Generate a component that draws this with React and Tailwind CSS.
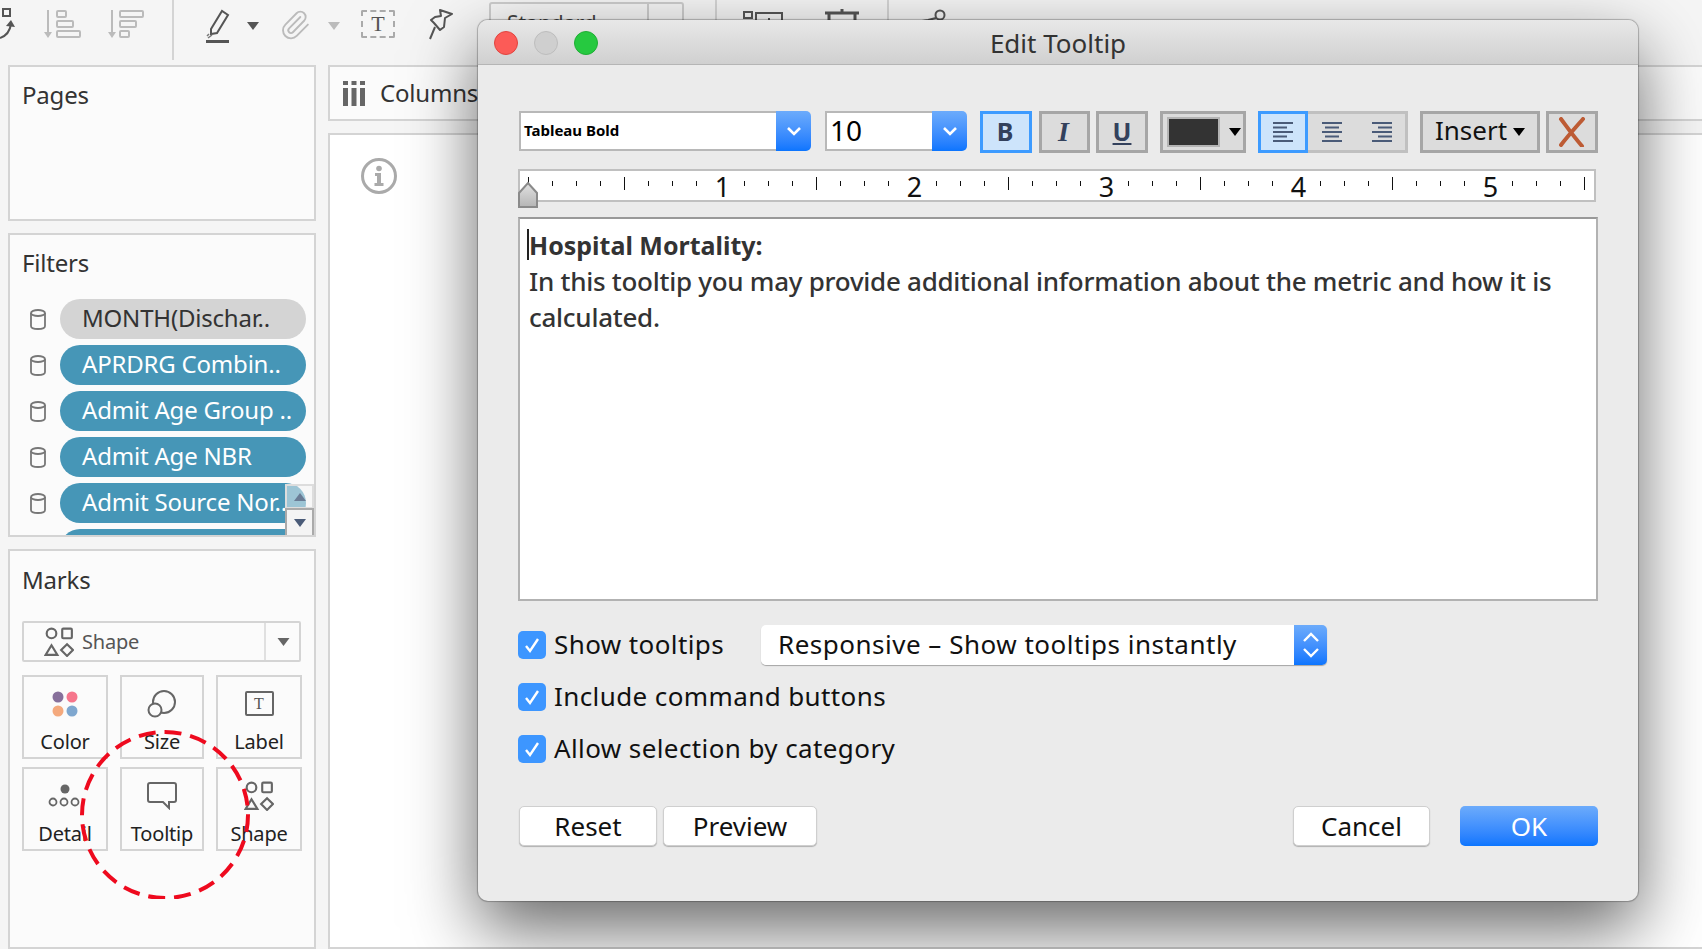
import React from "react";
import { Paperclip } from "lucide-react";

const UI = "font-['Noto_Sans',sans-serif]";
const TAB = "font-['Noto_Sans',sans-serif]";

function Caret({ className }) {
  return (
    <svg width="12" height="8" viewBox="0 0 12 8" className={className}>
      <path d="M0 0h12L6 8z" fill="currentColor" />
    </svg>
  );
}

function Chevron() {
  return (
    <svg width="18" height="12" viewBox="0 0 18 12">
      <path d="M3 3l6 6 6-6" fill="none" stroke="#fff" strokeWidth="2.6" />
    </svg>
  );
}

function Toolbar() {
  return (
    <div className="h-[65px] flex items-start shrink-0">
      <svg width="16" height="40" viewBox="0 0 16 40" className="mt-0 shrink-0">
        <rect x="3" y="9" width="7" height="7" fill="none" stroke="#555" strokeWidth="2" />
        <path d="M0 38c6-2 10-7 11-14" fill="none" stroke="#555" strokeWidth="2" />
        <path d="M6 26l5-6 4 7z" fill="#555" />
      </svg>
      <svg width="40" height="40" viewBox="0 0 40 40" className="ml-[28px] shrink-0">
        <path d="M4 10v24" stroke="#bbb" strokeWidth="2" />
        <path d="M0 32h8l-4 6z" fill="#bbb" />
        <g fill="none" stroke="#bbb" strokeWidth="2">
          <rect x="13" y="11" width="9" height="6" rx="1" />
          <rect x="13" y="21" width="16" height="6" rx="1" />
          <rect x="13" y="31" width="23" height="6" rx="1" />
        </g>
      </svg>
      <svg width="40" height="40" viewBox="0 0 40 40" className="ml-[24px] shrink-0">
        <path d="M4 10v24" stroke="#bbb" strokeWidth="2" />
        <path d="M0 32h8l-4 6z" fill="#bbb" />
        <g fill="none" stroke="#bbb" strokeWidth="2">
          <rect x="12" y="11" width="23" height="6" rx="1" />
          <rect x="12" y="21" width="16" height="6" rx="1" />
          <rect x="12" y="31" width="9" height="6" rx="1" />
        </g>
      </svg>
      <div className="ml-[24px] w-[2px] h-[60px] bg-[#d4d4d4] shrink-0" />
      <svg width="24" height="46" viewBox="0 0 24 46" className="ml-[32px] shrink-0">
        <path d="M5 29L16 11l6 4-11 18-6 1z" fill="none" stroke="#555" strokeWidth="2" />
        <path d="M2 38l4-3M1 36l2-2" stroke="#777" strokeWidth="1.5" />
        <rect x="0" y="40" width="23" height="3" fill="#555" />
      </svg>
      <Caret className="ml-[17px] mt-[22px] text-[#555] shrink-0" />
      <Paperclip size={32} strokeWidth={1.4} className="ml-[20px] mt-[9px] text-[#bbb] shrink-0" />
      <Caret className="ml-[17px] mt-[22px] text-[#bbb] shrink-0" />
      <div className="ml-[21px] mt-[10px] w-[34px] h-[28px] border-2 border-dashed border-[#aaa] rounded-[2px] flex items-center justify-center font-['Liberation_Serif',serif] text-[22px] leading-none text-[#555] shrink-0">T</div>
      <svg width="28" height="32" viewBox="0 0 28 32" className="ml-[31px] mt-[9px] shrink-0">
        <path d="M14 1l12 4-7 4-1 9-4 3-6-7-3-3 4-3 6-1z" fill="none" stroke="#555" strokeWidth="2" strokeLinejoin="round" />
        <path d="M9 18l-5 12" stroke="#555" strokeWidth="2" />
      </svg>
      <div className={`ml-[35px] mt-[2px] w-[195px] h-[40px] border-2 border-[#ccc] rounded-[3px] flex shrink-0 ${TAB}`}>
        <div className="w-[156px] pl-[16px] text-[21px] leading-[39px] text-[#444]">Standard</div>
        <div className="w-[2px] bg-[#ccc]" />
      </div>
      <div className="ml-[31px] w-[2px] h-[60px] bg-[#d4d4d4] shrink-0" />
      <svg width="40" height="20" viewBox="0 0 40 20" className="ml-[26px] mt-[10px] shrink-0">
        <rect x="1" y="2" width="8" height="6" fill="none" stroke="#555" strokeWidth="2" />
        <path d="M13 18V3h26v15M26 8v8" fill="none" stroke="#555" strokeWidth="2" />
      </svg>
      <svg width="36" height="20" viewBox="0 0 36 20" className="ml-[42px] mt-[7px] shrink-0">
        <path d="M0 6h34M4 6v14M30 6v14M17 2v4" fill="none" stroke="#555" strokeWidth="3" />
      </svg>
      <div className="ml-[26px] w-[2px] h-[60px] bg-[#d4d4d4] shrink-0" />
      <svg width="28" height="24" viewBox="0 0 28 24" className="ml-[32px] mt-[8px] shrink-0">
        <circle cx="19" cy="7" r="4.5" fill="none" stroke="#555" strokeWidth="2" />
        <path d="M15 10L7 12l-6 1" fill="none" stroke="#555" strokeWidth="2" />
      </svg>
    </div>
  );
}

function Panel({ title, className, titleClassName = "mt-[12px]", children }) {
  return (
    <div className={`border-2 border-[#d4d4d4] bg-[#fbfbfb] pl-[12px] pr-[8px] ${className}`}>
      <div className={`${TAB} text-[24px] tracking-[-0.2px] leading-[32px] text-[#333] ${titleClassName}`}>{title}</div>
      {children}
    </div>
  );
}

function Cylinder() {
  return (
    <svg width="18" height="22" viewBox="0 0 18 22" className="shrink-0">
      <g fill="none" stroke="#777" strokeWidth="1.8">
        <ellipse cx="9" cy="5" rx="7" ry="3" />
        <path d="M2 5v13c0 2 3 3 7 3s7-1 7-3V5" />
      </g>
    </svg>
  );
}

function FilterRow({ label, gray }) {
  return (
    <div className="flex items-center h-[40px] shrink-0">
      <div className="w-[19px] flex justify-center ml-[6px]"><Cylinder /></div>
      <div className={`ml-[13px] w-[246px] h-[40px] rounded-full pl-[22px] text-[24px] tracking-[-0.2px] leading-[37px] whitespace-nowrap overflow-hidden ${TAB} ${gray ? "bg-[#d4d4d4] text-[#333]" : "bg-[#4696b7] text-white"}`}>{label}</div>
    </div>
  );
}

function ShapeIcon({ size = 30 }) {
  return (
    <svg width={size} height={size} viewBox="0 0 28 28" className="shrink-0">
      <g fill="none" stroke="#666" strokeWidth="2">
        <circle cx="7" cy="6" r="4.5" />
        <rect x="17" y="1.5" width="9" height="9" rx="1" />
        <path d="M7 17l5.5 9H1.5z" />
        <path d="M21.5 16l5.5 5.5-5.5 5.5-5.5-5.5z" />
      </g>
    </svg>
  );
}

function MarkCard({ label, children }) {
  return (
    <div className="h-[84px] border-2 border-[#d4d4d4] flex flex-col items-center">
      <div className="h-[52px] flex items-center justify-center pt-[1px]">{children}</div>
      <div className={`${TAB} text-[20px] tracking-[-0.2px] leading-[26px] text-[#222]`}>{label}</div>
    </div>
  );
}

function Marks() {
  return (
    <Panel title="Marks" className="relative flex-1" titleClassName="mt-[13px]">
      <div className="mt-[25px] h-[41px] w-[279px] border-2 border-[#d4d4d4] rounded-[2px] flex items-center">
        <div className="ml-[20px]"><ShapeIcon /></div>
        <div className={`${TAB} ml-[8px] text-[20px] tracking-[-0.2px] text-[#555] w-[182px]`}>Shape</div>
        <div className="w-[2px] h-full bg-[#e0e0e0]" />
        <Caret className="ml-[11px] text-[#666] w-[13px]" />
      </div>
      <div className="mt-[13px] w-[280px] grid grid-cols-[86px_84px_86px] gap-x-[12px] gap-y-[8px]">
        <MarkCard label="Color">
          <svg width="26" height="26" viewBox="0 0 26 26">
            <circle cx="6" cy="6" r="5.5" fill="#87709b" />
            <circle cx="20" cy="6" r="5.5" fill="#f6768c" />
            <circle cx="6" cy="20" r="5.5" fill="#f4a97d" />
            <circle cx="20" cy="20" r="5.5" fill="#7fa7cf" />
          </svg>
        </MarkCard>
        <MarkCard label="Size">
          <svg width="30" height="28" viewBox="0 0 30 28">
            <g fill="none" stroke="#666" strokeWidth="2">
              <circle cx="17" cy="12" r="11" />
              <circle cx="8" cy="20" r="6.5" fill="#fbfbfb" />
            </g>
          </svg>
        </MarkCard>
        <MarkCard label="Label">
          <div className="w-[29px] h-[25px] border-2 border-[#666] rounded-[2px] flex items-center justify-center font-['Liberation_Serif',serif] text-[16px] leading-none text-[#555]">T</div>
        </MarkCard>
        <MarkCard label="Detail">
          <svg width="34" height="24" viewBox="0 0 34 24">
            <circle cx="17" cy="5" r="4.5" fill="#666" />
            <g fill="none" stroke="#666" strokeWidth="1.8">
              <circle cx="5" cy="18" r="3.5" />
              <circle cx="16" cy="18" r="3.5" />
              <circle cx="27" cy="18" r="3.5" />
            </g>
          </svg>
        </MarkCard>
        <MarkCard label="Tooltip">
          <svg width="30" height="28" viewBox="0 0 30 28">
            <path d="M3 1h24a2 2 0 0 1 2 2v15a2 2 0 0 1-2 2h-5v6l-6-6H3a2 2 0 0 1-2-2V3a2 2 0 0 1 2-2z" fill="none" stroke="#666" strokeWidth="2" />
          </svg>
        </MarkCard>
        <MarkCard label="Shape"><ShapeIcon /></MarkCard>
      </div>
      <svg width="180" height="180" viewBox="0 0 180 180" className="absolute left-[67px] top-[168px]">
        <circle cx="88" cy="96" r="83" fill="none" stroke="#ee0a1e" strokeWidth="4" strokeDasharray="17 9" />
      </svg>
    </Panel>
  );
}

function Sidebar() {
  return (
    <div className="ml-[8px] w-[308px] flex flex-col gap-[12px] shrink-0 h-[884px]">
      <Panel title="Pages" className="h-[156px] shrink-0" />
      <Panel title="Filters" className="h-[304px] shrink-0 relative overflow-hidden">
        <div className="mt-[20px] flex flex-col gap-[6px]">
          <FilterRow label="MONTH(Dischar.." gray />
          <FilterRow label="APRDRG Combin.." />
          <FilterRow label="Admit Age Group .." />
          <FilterRow label="Admit Age NBR" />
          <FilterRow label="Admit Source Nor.." />
          <FilterRow label="" />
        </div>
        <div className="absolute right-0 top-[249px] w-[29px] h-[25px] bg-[#f4f4f4]/50 border-2 border-[#ddd] flex items-center justify-center">
          <Caret className="rotate-180 text-[#6a7c95]" />
        </div>
        <div className="absolute right-0 top-[273px] w-[29px] h-[29px] bg-[#f4f4f4] border-2 border-[#aaa] flex items-center justify-center">
          <Caret className="text-[#4a5b78]" />
        </div>
      </Panel>
      <Marks />
    </div>
  );
}

function Main() {
  return (
    <div className="ml-[12px] flex-1 flex flex-col gap-[12px]">
      <div className="h-[56px] border-2 border-[#d4d4d4] border-r-0 bg-[#fbfbfb] flex items-center pl-[13px]">
        <svg width="22" height="26" viewBox="0 0 22 26" className="shrink-0">
          <g fill="#666">
            <rect x="0" y="1" width="5" height="4" />
            <rect x="0" y="8" width="5" height="18" />
            <rect x="8.5" y="1" width="5" height="4" />
            <rect x="8.5" y="8" width="5" height="18" />
            <rect x="17" y="1" width="5" height="4" />
            <rect x="17" y="8" width="5" height="18" />
          </g>
        </svg>
        <span className={`${TAB} ml-[15px] text-[24px] tracking-[-0.2px] text-[#333]`}>Columns</span>
      </div>
      <div className="flex-1 border-2 border-[#d4d4d4] border-r-0 bg-white pl-[30px] pt-[22px]">
        <svg width="38" height="38" viewBox="0 0 38 38">
          <circle cx="19" cy="19" r="16.5" fill="none" stroke="#aaa" strokeWidth="3" />
          <circle cx="19" cy="11.5" r="2.8" fill="#aaa" />
          <path d="M15 16h6v10h2.5v3H14.5v-3H17v-7h-2z" fill="#aaa" />
        </svg>
      </div>
    </div>
  );
}

function ToolBtn({ children, className = "", active }) {
  return (
    <div className={`h-[42px] border-[3px] flex items-center justify-center shrink-0 ${active ? "bg-[#cde4fb] border-[#3d9bff]" : "bg-[#dcdcdc] border-[#a6a6a6]"} ${className}`}>
      {children}
    </div>
  );
}

function AlignIcon({ kind }) {
  const short = kind === "left" ? 0 : kind === "center" ? 3 : 6;
  const rows = [[0, 20], [short, 14], [0, 20], [short, 14], [0, 20]];
  return (
    <svg width="20" height="22" viewBox="0 0 20 22">
      {rows.map((r, i) => (
        <rect key={i} x={r[0]} y={1 + i * 4.5} width={r[1]} height="2" fill="#4a5b78" />
      ))}
    </svg>
  );
}

function Combo({ className, blue, children }) {
  return (
    <div className={`h-[40px] flex shrink-0 ${className}`}>
      <div className="flex-1 bg-white border-2 border-r-0 border-[#b8b8b8] flex items-center overflow-hidden">{children}</div>
      <div className={`${blue} rounded-r-[5px] bg-gradient-to-b from-[#6cabfb] to-[#0a75fe] flex items-center justify-center`}><Chevron /></div>
    </div>
  );
}

function Ruler() {
  const ticks = [];
  for (let i = 0; i <= 44; i++) {
    const x = 10.5 + i * 24;
    if (i % 8 === 0 && i > 0) continue;
    if (i % 4 === 0) {
      ticks.push(<path key={i} d={`M${x} 8v13`} stroke="#111" strokeWidth="1" />);
    } else {
      ticks.push(<path key={i} d={`M${x} 12v5`} stroke="#111" strokeWidth="1" />);
    }
  }
  return (
    <svg width="1078" height="40" viewBox="0 0 1078 40" className="block mt-[16px] overflow-visible">
      <rect x="1" y="1" width="1076" height="31" fill="#fff" stroke="#c0c0c0" strokeWidth="2" />
      {ticks}
      {[1, 2, 3, 4, 5].map((n) => (
        <text key={n} x={12.5 + 192 * n} y="28" textAnchor="middle" fontSize="27" fill="#111" fontFamily="'Noto Sans', sans-serif">{n}</text>
      ))}
      <defs>
        <linearGradient id="mk" x1="0" y1="0" x2="0" y2="1">
          <stop offset="0" stopColor="#e2e2e2" />
          <stop offset="1" stopColor="#b5b5b5" />
        </linearGradient>
      </defs>
      <path d="M1 24l9-10 9 10v14H1z" fill="url(#mk)" stroke="#8a8a8a" strokeWidth="2" />
    </svg>
  );
}

function Check({ label }) {
  return (
    <div className="flex items-center h-[28px]">
      <div className="w-[28px] h-[28px] rounded-[5px] bg-[#3d96ff] flex items-center justify-center shrink-0">
        <svg width="18" height="18" viewBox="0 0 18 18">
          <path d="M3 10l4 5 8-12" fill="none" stroke="#fff" strokeWidth="2.4" />
        </svg>
      </div>
      <span className={`${UI} ml-[8px] mb-[2px] text-[26px] tracking-[0.4px] text-[#111] whitespace-nowrap`}>{label}</span>
    </div>
  );
}

function WhiteBtn({ className, children }) {
  return (
    <div className={`h-[40px] bg-white rounded-[5px] border border-[#cfcfcf] shadow-[0_1px_1px_rgba(0,0,0,0.25)] flex items-center justify-center ${UI} text-[26px] text-[#111] shrink-0 ${className}`}>{children}</div>
  );
}

function Dialog() {
  return (
    <div className="absolute left-[478px] top-[20px] w-[1160px] h-[881px] rounded-[10px] bg-[#ebebeb] shadow-[0_28px_70px_rgba(0,0,0,0.6),0_0_1px_1px_rgba(0,0,0,0.25)] overflow-hidden">
      <div className="relative h-[45px] bg-gradient-to-b from-[#e8e8e8] to-[#d0d0d0] border-b border-[#b5b5b5] flex items-center justify-center">
        <div className="absolute left-[16px] top-[11px] flex gap-[16px]">
          <div className="w-[24px] h-[24px] rounded-full bg-[#fc5b57] border border-[#e0443e]" />
          <div className="w-[24px] h-[24px] rounded-full bg-[#cfcfcf] border border-[#bdbdbd]" />
          <div className="w-[24px] h-[24px] rounded-full bg-[#26c940] border border-[#1fae35]" />
        </div>
        <span className={`${UI} text-[26px] text-[#333] pt-[3px]`}>Edit Tooltip</span>
      </div>
      <div className="pl-[40px] pr-[40px]">
        <div className="mt-[46px] flex items-start">
          <Combo className="w-[292px] ml-[1px]" blue="w-[35px]">
            <span className={`${UI} pl-[3px] pb-[2px] text-[15px] font-bold text-black`}>Tableau Bold</span>
          </Combo>
          <Combo className="w-[142px] ml-[14px]" blue="w-[35px]">
            <span className={`${UI} pl-[3px] pb-[2px] text-[28px] text-black`}>10</span>
          </Combo>
          <ToolBtn active className={`ml-[13px] w-[52px] pr-[2px] ${UI} text-[25px] font-bold text-[#33415c]`}>B</ToolBtn>
          <ToolBtn className={`ml-[7px] w-[51px] pr-[2px] font-['Liberation_Serif',serif] italic text-[28px] font-bold text-[#33415c]`}>I</ToolBtn>
          <ToolBtn className={`ml-[6px] w-[52px] ${UI} text-[25px] font-bold underline text-[#33415c]`}>U</ToolBtn>
          <ToolBtn className="ml-[12px] w-[86px] justify-start pl-[4px]">
            <div className="w-[53px] h-[30px] bg-[#333] border-2 border-[#b4b4b4]" />
            <Caret className="ml-[9px] text-black" />
          </ToolBtn>
          <div className="ml-[12px] w-[150px] h-[42px] flex shrink-0">
            <ToolBtn active className="w-[50px]"><AlignIcon kind="left" /></ToolBtn>
            <div className="flex-1 bg-[#dcdcdc] border-[3px] border-l-0 border-[#c0c0c0] flex items-center justify-between pl-[14px] pr-[13px]">
              <AlignIcon kind="center" />
              <AlignIcon kind="right" />
            </div>
          </div>
          <ToolBtn className={`ml-[12px] w-[120px] ${UI} text-[26px] text-[#111]`}>
            <span className="pb-[4px]">Insert</span>
            <Caret className="ml-[6px] text-black" />
          </ToolBtn>
          <ToolBtn className="ml-[6px] w-[52px]">
            <svg width="28" height="30" viewBox="0 0 28 30">
              <path d="M3 2c6 8 13 18 21 27M25 2C18 10 9 20 3 28" fill="none" stroke="#bd5b34" strokeWidth="4" strokeLinecap="round" />
            </svg>
          </ToolBtn>
        </div>
        <Ruler />
        <div className={`h-[384px] mt-[8px] bg-white border-2 border-[#b2b2b2] border-t-[#999] pl-[9px] pr-[10px] pt-[8px] ${TAB} text-[26px] tracking-[-0.27px] font-medium leading-[36px] text-[#333] relative`}>
          <div className="absolute left-[7px] top-[10px] w-[2px] h-[31px] bg-[#222]" />
          <div className="font-bold text-[25px] tracking-normal">Hospital Mortality:</div>
          <div>In this tooltip you may provide additional information about the metric and how it is calculated.</div>
        </div>
        <div className="mt-[24px] flex items-center">
          <div className="w-[243px]"><Check label="Show tooltips" /></div>
          <div className="w-[566px] h-[40px] flex rounded-[5px] shadow-[0_1px_1px_rgba(0,0,0,0.3)] overflow-hidden">
            <div className={`flex-1 bg-white flex items-center pl-[17px] pb-[2px] ${UI} text-[26px] tracking-[0.5px] text-[#111] whitespace-nowrap`}>Responsive – Show tooltips instantly</div>
            <div className="w-[33px] bg-gradient-to-b from-[#6cabfb] to-[#0a75fe] flex items-center justify-center">
              <svg width="18" height="28" viewBox="0 0 18 28">
                <path d="M2 10l7-7 7 7M2 18l7 7 7-7" fill="none" stroke="#fff" strokeWidth="2.4" />
              </svg>
            </div>
          </div>
        </div>
        <div className="mt-[18px] flex flex-col gap-[24px]">
          <Check label="Include command buttons" />
          <Check label="Allow selection by category" />
        </div>
        <div className="mt-[43px] flex items-center">
          <WhiteBtn className="w-[138px] ml-[1px]">Reset</WhiteBtn>
          <WhiteBtn className="w-[154px] ml-[6px]">Preview</WhiteBtn>
          <WhiteBtn className="w-[137px] ml-auto">Cancel</WhiteBtn>
          <div className={`w-[138px] h-[40px] ml-[30px] rounded-[5px] bg-gradient-to-b from-[#6cabfb] to-[#0a75fe] flex items-center justify-center ${UI} text-[26px] text-white shrink-0`}>OK</div>
        </div>
      </div>
    </div>
  );
}

export default function App() {
  return (
    <div className="relative w-[1702px] h-[949px] overflow-hidden bg-[#f5f5f5] flex flex-col">
      <Toolbar />
      <div className="flex flex-1">
        <Sidebar />
        <Main />
      </div>
      <Dialog />
    </div>
  );
}
